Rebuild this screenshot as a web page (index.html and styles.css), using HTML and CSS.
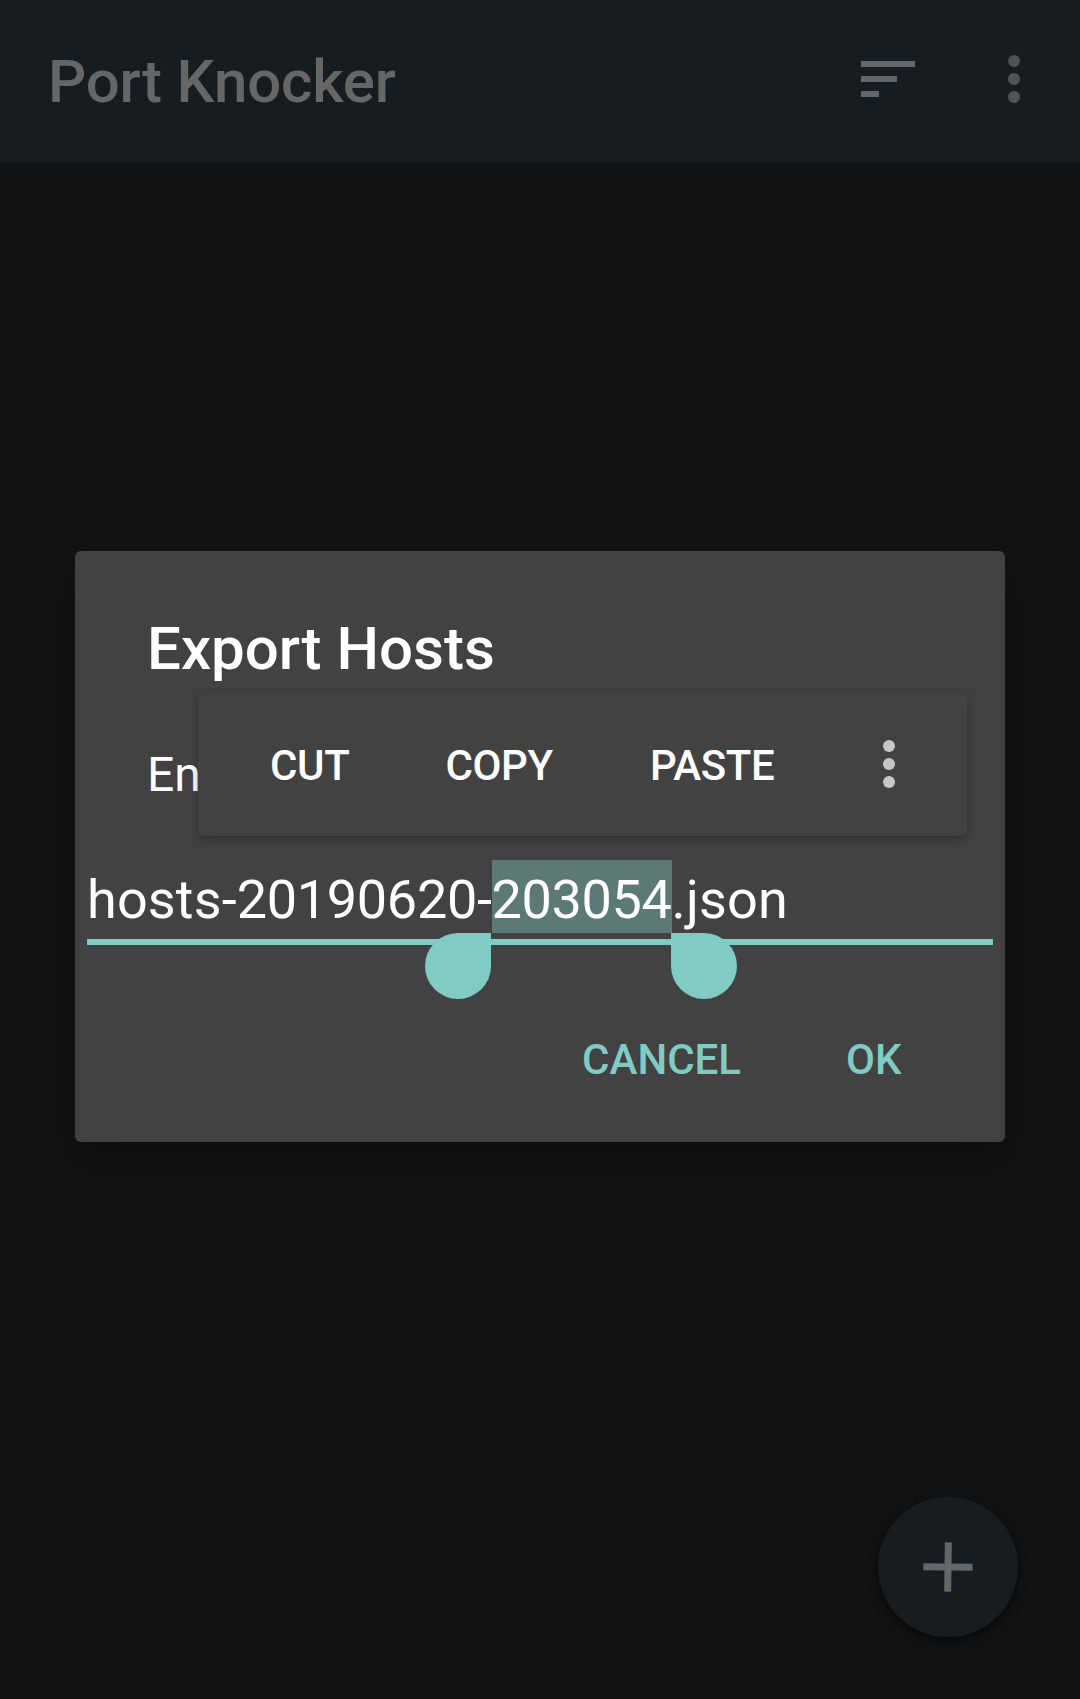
FILE: index.html
```html
<!DOCTYPE html>
<html lang="en">
<head>
<meta charset="utf-8">
<title>Port Knocker</title>
<link rel="stylesheet" href="styles.css">
</head>
<body>
<div class="screen">
  <header class="app-bar">
    <h1 class="app-title">Port Knocker</h1>
    <svg class="sort-icon" width="54" height="36" viewBox="0 0 54 36"><path d="M0 0h54v6H0zM0 15h36v6H0zM0 30h18v6H0z"/></svg>
    <svg class="more-icon" width="12" height="48" viewBox="0 0 12 48"><circle cx="6" cy="6" r="6"/><circle cx="6" cy="24" r="6"/><circle cx="6" cy="42" r="6"/></svg>
  </header>

  <button class="fab" aria-label="Add">
    <svg width="54" height="54" viewBox="-27 -27 54 54"><path transform="rotate(0.8)" d="M-3.5 -24.6h7v21.1h21.1v7h-21.1v21.1h-7v-21.1h-21.1v-7h21.1z"/></svg>
  </button>

  <section class="dialog">
    <h2 class="dialog-title">Export Hosts</h2>
    <p class="message">En</p>
    <div class="field">
      <span class="part prefix">hosts-</span><span class="part digits">20190620-</span><span class="part digits selected">203054<i class="handle handle-start"></i><i class="handle handle-end"></i></span><span class="part extension">.json</span>
    </div>
    <div class="actions">
      <button class="action cancel">CANCEL</button>
      <button class="action ok">OK</button>
    </div>
    <div class="toolbar">
      <span class="tool cut">CUT</span>
      <span class="tool copy">COPY</span>
      <span class="tool paste">PASTE</span>
      <svg class="tool-more" width="12" height="48" viewBox="0 0 12 48"><circle cx="6" cy="6" r="6"/><circle cx="6" cy="24" r="6"/><circle cx="6" cy="42" r="6"/></svg>
    </div>
  </section>
</div>
</body>
</html>
```
FILE: styles.css
```css
* { box-sizing: border-box; margin: 0; padding: 0; }

body {
  background: #131313;
  font-family: Roboto, sans-serif;
}

button {
  border: 0;
  background: none;
  font-family: inherit;
}

.screen {
  position: relative;
  width: 1080px;
  height: 1699px;
  overflow: hidden;
  background: #131313;
}

.app-bar {
  display: flex;
  align-items: center;
  height: 163px;
  padding: 0 60px 0 48px;
  background: #171c20;
}

.app-title {
  flex: 1;
  color: #666;
  font-size: 60px;
  font-weight: 500;
  letter-spacing: -.18px;
  line-height: 71px;
}

.sort-icon { fill: #666; margin: 0 93px 5px 0; }
.more-icon { fill: #505355; margin-bottom: 5px; }

.fab {
  position: absolute;
  left: 878px;
  top: 1497px;
  display: flex;
  align-items: center;
  justify-content: center;
  width: 140px;
  height: 140px;
  border-radius: 50%;
  background: #171c20;
  box-shadow: 0 5px 10px rgba(0, 0, 0, .5), 0 2px 14px rgba(0, 0, 0, .2);
}

.fab path { fill: #666; }

.dialog {
  position: absolute;
  left: 75px;
  top: 551px;
  width: 930px;
  height: 591px;
  padding-top: 62px;
  border-radius: 6px;
  background: #424242;
  box-shadow: 0 22px 44px rgba(0, 0, 0, .25);
  color: #fff;
}

.dialog-title {
  padding-left: 72px;
  font-size: 60px;
  font-weight: 500;
  line-height: 71px;
}

.message {
  margin-top: 62px;
  padding-left: 72px;
  font-size: 48px;
  line-height: 57px;
}

.field {
  display: flex;
  height: 85px;
  margin: 57px 12px 0;
  border-bottom: 6px solid #80cbc4;
  font-size: 54px;
}

.part {
  height: 73px;
  padding-top: 6px;
  line-height: 67px;
}

.prefix { letter-spacing: .15px; }
.digits { letter-spacing: -.33px; }
.extension { letter-spacing: .15px; }

.selected {
  position: relative;
  width: 180px;
  background: #5c7976;
}

.handle {
  position: absolute;
  top: 73px;
  width: 66px;
  height: 66px;
  background: #80cbc4;
}

.handle-start { right: 181px; border-radius: 50% 0 50% 50%; }
.handle-end { left: 179px; border-radius: 0 50% 50% 50%; }

.actions {
  display: flex;
  justify-content: flex-end;
  gap: 105px;
  margin-top: 90px;
  padding-right: 103.5px;
}

.action {
  color: #80cbc4;
  font-size: 42px;
  font-weight: 500;
  line-height: 49px;
}

.toolbar {
  position: absolute;
  left: 123px;
  top: 141px;
  display: flex;
  align-items: center;
  width: 769px;
  height: 144px;
  padding: 3px 72px 0;
  border-radius: 6px;
  background: #424242;
  box-shadow: 0 3px 8px rgba(0, 0, 0, .3);
  font-size: 42px;
  font-weight: 500;
  letter-spacing: -.35px;
  line-height: 49px;
}

.copy { margin-left: 96px; }
.paste { margin-left: 97px; }
.tool-more { margin: 0 0 3px auto; fill: #c6c6c6; }
```
